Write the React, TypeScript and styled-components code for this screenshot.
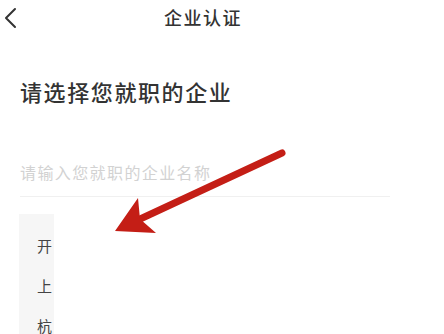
import React from "react";
import styled, { createGlobalStyle } from "styled-components";

const Global = createGlobalStyle`
  html, body { margin: 0; padding: 0; background: #ffffff; }
  body { font-family: "Noto Sans CJK SC", "Noto Sans", sans-serif; }
`;

const Page = styled.div`
  position: relative;
  width: 444px;
  height: 334px;
  overflow: hidden;
  background: #fff;
`;

const Content = styled.div`
  width: 410px;
  display: flex;
  flex-direction: column;
`;

const Header = styled.div`
  height: 35px;
  display: grid;
  grid-template-columns: 40px 1fr 40px;
  align-items: center;
`;

const Back = styled.div`
  display: flex;
  align-items: center;
  padding-left: 3px;
  height: 35px;
`;

const Title = styled.div`
  text-align: center;
  font-size: 18px;
  line-height: 35px;
  letter-spacing: 1.5px;
  color: #333;
  font-weight: 500;
  padding-right: 4px;
`;

const Heading = styled.h1`
  margin: 41px 0 0;
  padding-left: 20px;
  font-size: 22px;
  line-height: 30px;
  letter-spacing: 1.6px;
  font-weight: 500;
  color: #333;
`;

const Field = styled.div`
  margin: 54px 20px 0;
  padding-bottom: 12px;
  border-bottom: 1px solid #f0f0f0;
  font-size: 16px;
  line-height: 24px;
  letter-spacing: 1.4px;
  color: #d2d2d2;
`;

const List = styled.div`
  margin: 17px 0 0 19px;
  width: 35px;
  height: 140px;
  background: #f6f6f6;
  padding-top: 12px;
  display: flex;
  flex-direction: column;
`;

const Item = styled.div`
  height: 40px;
  line-height: 40px;
  padding-left: 18px;
  font-size: 15px;
  color: #444;
  white-space: nowrap;
  overflow: hidden;
`;

const Overlay = styled.svg`
  position: absolute;
  left: 0;
  top: 0;
  pointer-events: none;
`;

export default function App() {
  return (
    <Page>
      <Global />
      <Content>
        <Header>
          <Back>
            <svg width="14" height="22" viewBox="0 0 14 22">
              <path d="M12 2 L3 11 L12 20" fill="none" stroke="#333" strokeWidth="2" strokeLinecap="round" strokeLinejoin="round" />
            </svg>
          </Back>
          <Title>企业认证</Title>
          <div />
        </Header>
        <Heading>请选择您就职的企业</Heading>
        <Field>请输入您就职的企业名称</Field>
        <List>
          <Item>开</Item>
          <Item>上</Item>
          <Item>杭</Item>
        </List>
      </Content>
      <Overlay width="444" height="334" viewBox="0 0 444 334">
        <line x1="282" y1="153" x2="138" y2="220" stroke="#c41e16" strokeWidth="7" strokeLinecap="round" />
        <polygon points="115,231 138,198 140,219 156,233" fill="#c41e16" />
      </Overlay>
    </Page>
  );
}
